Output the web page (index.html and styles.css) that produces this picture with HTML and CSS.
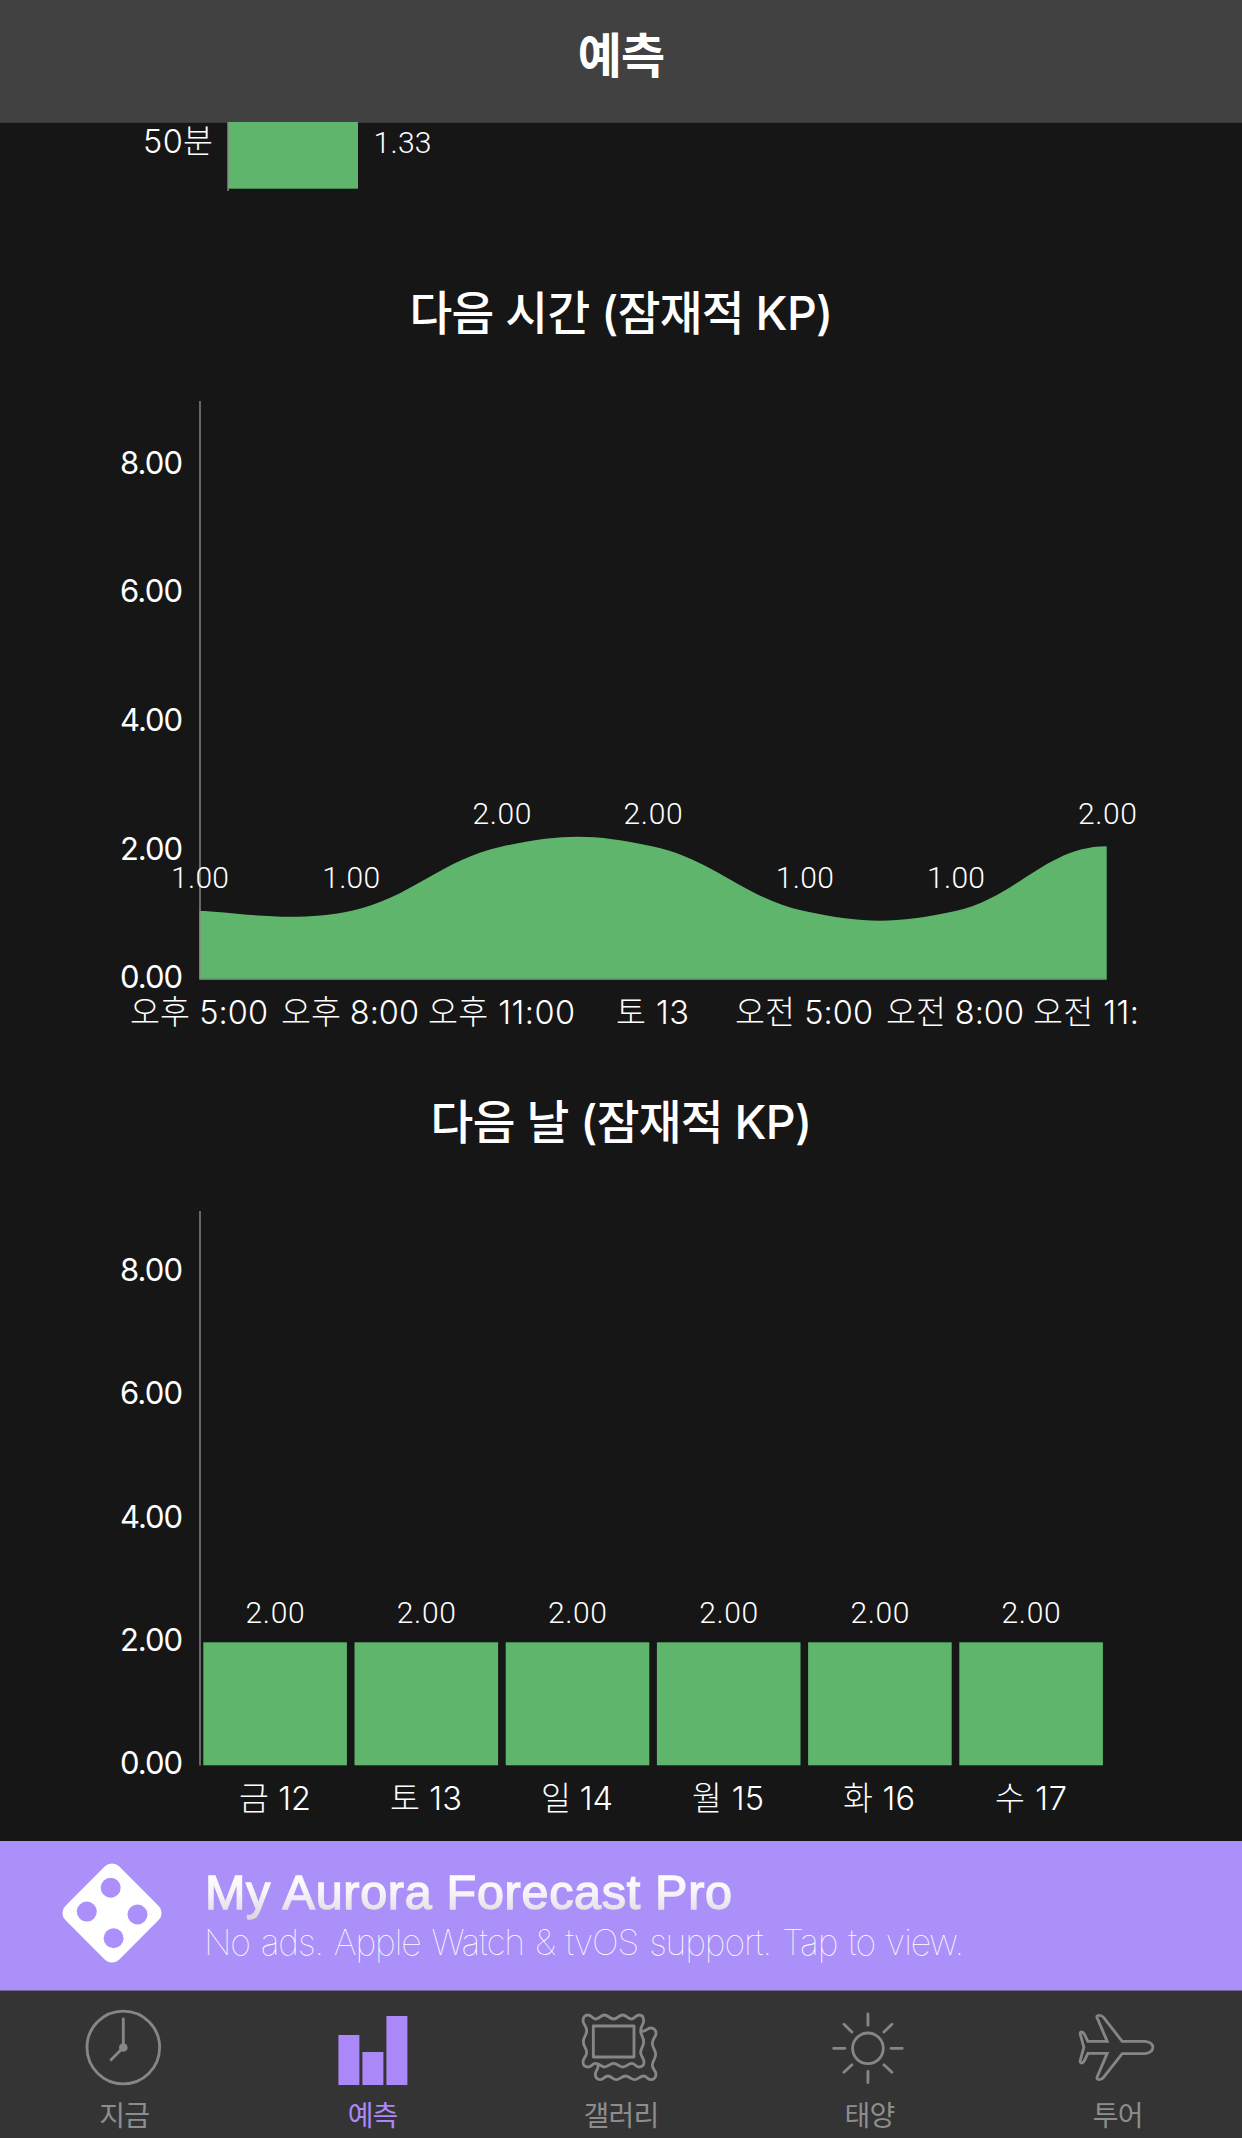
FILE: index.html
```html
<!DOCTYPE html>
<html lang="ko">
<head>
<meta charset="utf-8">
<title>예측</title>
<link rel="stylesheet" href="styles.css">
</head>
<body>
<div class="app">
  <header class="nav-bar"><h1 class="nav-title">예측</h1></header>

  <main class="content">
    <svg class="chart chart-minutes" viewBox="0 123 1242 122">
      <rect class="fill" x="228" y="122" width="130" height="66.7"/>
      <path class="axis" d="M228 122V191"/>
      <text class="category" x="143" y="153.2" textLength="70">50분</text>
      <text class="value" x="373.5" y="153.3" textLength="58">1.33</text>
    </svg>

    <section class="panel panel-hours">
      <h2 class="panel-title">다음 시간 (잠재적 KP)</h2>
      <svg class="chart chart-hours" viewBox="0 390 1242 650">
        <path class="fill" d="M199.5 911C229.7 911 290.2 923.9 350.7 911C411.2 898.1 441.4 859.4 501.9 846.5C562.4 833.6 592.6 833.6 653.1 846.5C713.6 859.4 743.8 898.1 804.3 911C864.8 923.9 895 923.9 955.5 911C1016 898.1 1046.5 846.3 1106.7 846.3V979H199.5Z"/>
        <path class="axis" d="M200 401V979.5"/>
        <path class="baseline" d="M199.5 979.2H1106.7"/>
        <g class="scale">
          <text x="120" y="473.8" textLength="63">8.00</text>
          <text x="120" y="602.4" textLength="63">6.00</text>
          <text x="120" y="731.1" textLength="63">4.00</text>
          <text x="120" y="859.9" textLength="63">2.00</text>
          <text x="120" y="987.8" textLength="63">0.00</text>
        </g>
        <g class="value">
          <text x="171" y="888.3" textLength="58">1.00</text>
          <text x="322.2" y="888.3" textLength="58">1.00</text>
          <text x="472.4" y="823.8" textLength="59">2.00</text>
          <text x="623.6" y="823.8" textLength="59">2.00</text>
          <text x="775.8" y="888.3" textLength="58">1.00</text>
          <text x="927" y="888.3" textLength="58">1.00</text>
          <text x="1078" y="823.8" textLength="59">2.00</text>
        </g>
        <svg class="category" x="0" y="990" width="1137" height="50" viewBox="0 990 1137 50">
          <text x="130" y="1023.8" textLength="138">오후 5:00</text>
          <text x="281" y="1023.8" textLength="138">오후 8:00</text>
          <text x="428" y="1023.8" textLength="147">오후 11:00</text>
          <text x="616" y="1023.8" textLength="73">토 13</text>
          <text x="735" y="1023.8" textLength="138">오전 5:00</text>
          <text x="886" y="1023.8" textLength="138">오전 8:00</text>
          <text x="1033" y="1023.8" textLength="147">오전 11:00</text>
        </svg>
      </svg>
    </section>

    <section class="panel panel-days">
      <h2 class="panel-title">다음 날 (잠재적 KP)</h2>
      <svg class="chart chart-days" viewBox="0 1200 1242 641">
        <path class="axis" d="M200 1211V1765.5"/>
        <g class="fill">
          <rect x="203.3" y="1642.3" width="143.6" height="123"/>
          <rect x="354.5" y="1642.3" width="143.6" height="123"/>
          <rect x="505.7" y="1642.3" width="143.6" height="123"/>
          <rect x="656.9" y="1642.3" width="143.6" height="123"/>
          <rect x="808.1" y="1642.3" width="143.6" height="123"/>
          <rect x="959.3" y="1642.3" width="143.6" height="123"/>
        </g>
        <g class="scale">
          <text x="120" y="1281" textLength="63">8.00</text>
          <text x="120" y="1404.2" textLength="63">6.00</text>
          <text x="120" y="1527.6" textLength="63">4.00</text>
          <text x="120" y="1650.8" textLength="63">2.00</text>
          <text x="120" y="1773.9" textLength="63">0.00</text>
        </g>
        <g class="value">
          <text x="245.6" y="1622.6" textLength="59">2.00</text>
          <text x="396.8" y="1622.6" textLength="59">2.00</text>
          <text x="548" y="1622.6" textLength="59">2.00</text>
          <text x="699.2" y="1622.6" textLength="59">2.00</text>
          <text x="850.4" y="1622.6" textLength="59">2.00</text>
          <text x="1001.6" y="1622.6" textLength="59">2.00</text>
        </g>
        <g class="category">
          <text x="239" y="1810" textLength="72">금 12</text>
          <text x="390" y="1810" textLength="72">토 13</text>
          <text x="541" y="1810" textLength="72">일 14</text>
          <text x="692" y="1810" textLength="72">월 15</text>
          <text x="843" y="1810" textLength="72">화 16</text>
          <text x="995" y="1810" textLength="72">수 17</text>
        </g>
      </svg>
    </section>
  </main>

  <aside class="promo">
    <svg class="promo-icon" viewBox="0 0 100 100">
      <rect x="12" y="12" width="76" height="76" rx="10" transform="rotate(45 50 50)"/>
      <g class="promo-dots"><circle cx="48.7" cy="24.8" r="10"/><circle cx="24.8" cy="48.6" r="10"/><circle cx="75.5" cy="51.5" r="10"/><circle cx="51.6" cy="75.2" r="10"/></g>
    </svg>
    <svg class="promo-copy" viewBox="200 1841 800 149">
      <defs>
        <linearGradient id="sheen" gradientUnits="userSpaceOnUse" x1="0" y1="1874" x2="0" y2="1920"><stop offset="0" stop-color="#fff"/><stop offset=".45" stop-color="#f4f2f8"/><stop offset="1" stop-color="#d8d6dc"/></linearGradient>
      </defs>
      <text class="promo-title" x="205" y="1909" textLength="527">My Aurora Forecast Pro</text>
      <text class="promo-text" x="204" y="1955" textLength="760">No ads. Apple Watch &amp; tvOS support. Tap to view.</text>
    </svg>
  </aside>

  <nav class="tab-bar">
    <a class="tab">
      <svg class="tab-icon" viewBox="246.6 525 252 252"><circle cx="370.5" cy="652.5" r="109"/><path d="M370.5 567V652.5L334 689"/><circle class="solid" cx="370.5" cy="652.5" r="13"/></svg>
      <span>지금</span>
    </a>
    <a class="tab tab-active">
      <svg class="tab-icon" viewBox="991.8 525 252 252"><path class="solid" d="M1014 615h63v150h-63zM1086 666h63v99h-63zM1158 558h63v207h-63z"/></svg>
      <span>예측</span>
    </a>
    <a class="tab">
      <svg class="tab-icon" viewBox="237 525 252 252">
        <path d="M280 588H402V681H280Z"/>
        <path d="M264 555C276 555 276 567 287 567C299 567 302 555 313 555C325 555 329 567 341 567C352 567 357 555 368 555C380 555 384 567 395 567C405 567 406 555 417 555C427 555 431 563 431 572C431 584 422 587 422 602C422 617 431 620 431 635C431 650 422 653 422 668C422 680 432 683 432 696C432 705 426 711 417 711C406 711 405 700 395 700C384 700 380 711 368 711C357 711 352 700 341 700C329 700 325 711 313 711C302 711 299 700 287 700C276 700 276 711 264 711C255 711 249 705 249 696C249 683 260 680 260 668C260 653 250 650 250 635C250 620 260 617 260 602C260 587 249 584 249 572C249 563 254 555 264 555Z"/>
        <path d="M424 604C438 606 441 594 452 594C462 594 468 601 468 610C468 622 457 625 457 640C457 655 467 658 467 673C467 688 457 691 457 706C457 718 468 721 468 733C468 742 461 749 452 749C441 749 441 738 431 738C419 738 415 749 404 749C393 749 388 738 377 738C365 738 360 749 349 749C338 749 335 738 324 738C313 738 311 749 301 749C291 749 286 742 286 733C286 721 296 718 294 706"/>
      </svg>
      <span>갤러리</span>
    </a>
    <a class="tab">
      <svg class="tab-icon" viewBox="982.2 525 252 252"><circle cx="1105" cy="655" r="46"/><path d="M1105 552V586M1105 724V758M1002 655H1036M1174 655H1208M1033 583L1057 606M1153 704L1177 727M1177 583L1153 606M1057 704L1033 727"/></svg>
      <span>태양</span>
    </a>
    <a class="tab">
      <svg class="tab-icon" viewBox="407.4 75 252 252"><path class="plane" d="M443 184H501L472 116Q466 106 477 106Q485 106 490 112L546 184H615Q638 187 638 202Q638 218 615 221H546L490 292Q485 299 477 299Q467 299 472 288L501 220H443L433 241Q429 249 424 249Q419 249 420 242L431 202L420 162Q419 156 424 156Q429 156 433 163Z"/></svg>
      <span>투어</span>
    </a>
  </nav>
</div>
</body>
</html>
```
FILE: styles.css
```css
* { box-sizing: border-box; }
body { margin: 0; background: #161616; color: #fff; font-family: Inter, "Noto Sans CJK KR", sans-serif; }
.app { display: flex; flex-direction: column; width: 1242px; height: 2138px; overflow: hidden; }

.nav-bar { height: 123px; flex: none; display: flex; align-items: center; justify-content: center; padding-bottom: 11px; background: #414141; border-bottom: 1px solid #383838; }
.nav-title { margin: 0; font-size: 48px; line-height: 60px; font-weight: 700; letter-spacing: -1px; }

.content { flex: none; height: 1718px; display: flex; flex-direction: column; }
.chart { display: block; flex: none; width: 1242px; }
.chart-minutes { height: 122px; overflow: visible; }
.panel { display: flex; flex-direction: column; }
.panel-title { margin: 0; text-align: center; font-size: 46.5px; font-weight: 500; letter-spacing: -0.7px; white-space: nowrap; }
.panel-hours .panel-title { height: 145px; line-height: 137px; }
.chart-hours { height: 650px; }
.panel-days .panel-title { height: 160px; line-height: 165px; }
.chart-days { height: 641px; }

.fill { fill: #5fb56c; }
.axis { stroke: #8a8a8a; stroke-width: 1.4; fill: none; }
.baseline { stroke: #5e8364; stroke-width: 1.4; }
.chart text { fill: #fff; }
.scale { font-size: 31px; font-weight: 400; }
.value { font-family: Roboto, sans-serif; font-size: 30px; font-weight: 300; }
.category { font-size: 32.5px; font-weight: 300; overflow: hidden; }

.promo { flex: none; height: 150px; display: flex; align-items: center; padding: 0 0 5px 62px; background: #ac90f9; border-bottom: 1px solid #786899; }
.promo-icon { width: 100px; height: 100px; fill: #fff; flex: none; }
.promo-dots { fill: #ac90f9; }
.promo-copy { width: 800px; height: 149px; margin: 5px 0 0 38px; }
.promo-title { font-family: "Liberation Sans", sans-serif; font-size: 48.5px; fill: url(#sheen); stroke: url(#sheen); stroke-width: 1.4; }
.promo-text { font-size: 35.6px; font-weight: 100; word-spacing: 2px; fill: #fff; }

.tab-bar { flex: none; height: 147px; display: grid; grid-template-columns: repeat(5, 1fr); background: #343434; color: #8d8d8d; }
.tab { display: flex; flex-direction: column; align-items: center; padding-top: 14px; font-size: 28px; font-weight: 400; line-height: 40px; }
.tab span { margin-top: 7px; letter-spacing: -0.8px; }
.tab-icon { width: 84px; height: 84px; flex: none; fill: none; stroke: #868686; stroke-width: 8.5; stroke-linecap: round; stroke-linejoin: round; }
.tab-icon .solid { fill: #868686; stroke: none; }
.tab-icon .plane { stroke-linejoin: miter; }
.tab-active { color: #aa88f8; }
.tab-active .tab-icon .solid { fill: #aa88f8; }
```
